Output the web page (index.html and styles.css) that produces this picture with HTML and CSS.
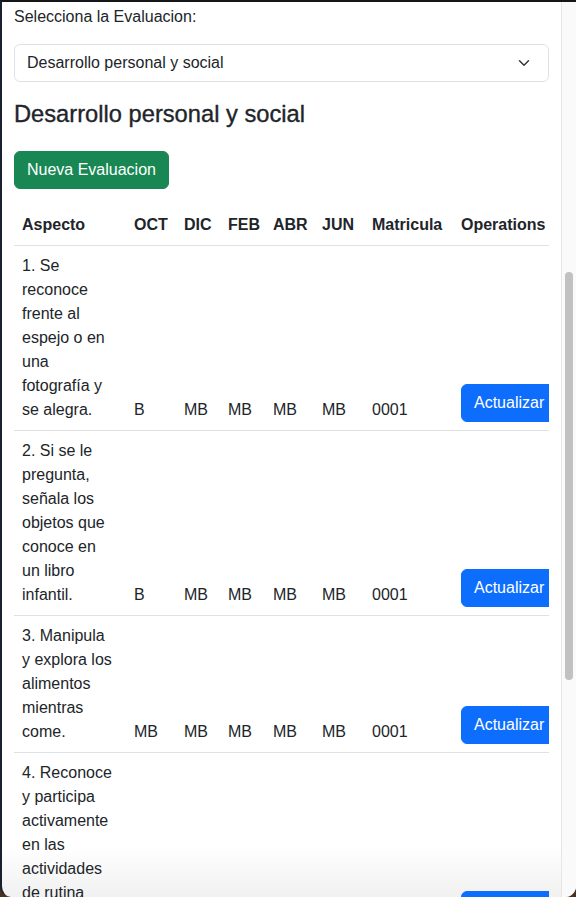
FILE: index.html
```html
<!DOCTYPE html>
<html lang="es">
<head>
<meta charset="utf-8">
<title>Evaluacion</title>
<link rel="stylesheet" href="styles.css">
</head>
<body>
<div class="window">
  <main class="content">
    <label class="form-label" for="eval">Selecciona la Evaluacion:</label>
    <div class="select">
      <span>Desarrollo personal y social</span>
      <svg class="chev" width="16" height="12" viewBox="0 0 16 16"><path d="m2 5 6 6 6-6" fill="none" stroke="#343a40" stroke-width="2" stroke-linecap="round" stroke-linejoin="round"/></svg>
    </div>
    <h3 class="title">Desarrollo personal y social</h3>
    <button class="btn btn-success">Nueva Evaluacion</button>
    <div class="table-responsive">
      <table class="table">
        <colgroup>
          <col class="c-asp"><col class="c-oct"><col class="c-dic"><col class="c-feb"><col class="c-abr"><col class="c-jun"><col class="c-mat"><col class="c-op">
        </colgroup>
        <thead>
          <tr><th>Aspecto</th><th>OCT</th><th>DIC</th><th>FEB</th><th>ABR</th><th>JUN</th><th>Matricula</th><th>Operations</th></tr>
        </thead>
        <tbody>
          <tr><td>1. Se reconoce frente al espejo o en una fotografía y se alegra.</td><td>B</td><td>MB</td><td>MB</td><td>MB</td><td>MB</td><td>0001</td><td><button class="btn btn-primary">Actualizar</button></td></tr>
          <tr><td>2. Si se le pregunta, señala los objetos que conoce en un libro infantil.</td><td>B</td><td>MB</td><td>MB</td><td>MB</td><td>MB</td><td>0001</td><td><button class="btn btn-primary">Actualizar</button></td></tr>
          <tr><td>3. Manipula y explora los alimentos mientras come.</td><td>MB</td><td>MB</td><td>MB</td><td>MB</td><td>MB</td><td>0001</td><td><button class="btn btn-primary">Actualizar</button></td></tr>
          <tr><td>4. Reconoce y participa activamente en las actividades de rutina diaria.</td><td>MB</td><td>MB</td><td>MB</td><td>MB</td><td>MB</td><td>0001</td><td><button class="btn btn-primary">Actualizar</button></td></tr>
        </tbody>
      </table>
    </div>
  </main>
  <div class="scrollbar"><div class="thumb"></div></div>
</div>
</body>
</html>
```
FILE: styles.css
```css
* { box-sizing: border-box; }
html, body { margin: 0; padding: 0; }
body {
  background: #4a3220;
  font-family: "Liberation Sans", Arial, Helvetica, sans-serif;
  font-size: 16px;
  line-height: 1.5;
  color: #212529;
}
.window {
  height: 897px;
  display: flex;
  background: linear-gradient(to bottom, #ffffff 0, #ffffff 845px, #f0f0f0 897px);
  border-top: 2px solid #15161a;
  border-left: 2px solid #1b2031;
  border-radius: 0 0 11px 11px;
  overflow: hidden;
}
.content {
  flex: 1;
  min-width: 0;
  padding: 3px 12px 0 12px;
  overflow: hidden;
}
.form-label {
  display: block;
  margin-bottom: 15px;
}
.select {
  display: flex;
  align-items: center;
  justify-content: space-between;
  height: 38px;
  padding: 0 12px 0 12px;
  border: 1px solid #dee2e6;
  border-radius: 6px;
  background: #fff;
}
.chev { margin-right: 4px; }
.title {
  margin: 18px 0 8px;
  font-size: 23.7px;
  font-weight: 500;
  line-height: 1.2;
  -webkit-text-stroke: 0.35px #212529;
}
.btn {
  display: inline-block;
  font-family: inherit;
  font-size: 16px;
  line-height: 1.5;
  padding: 6px 12px;
  border: 1px solid transparent;
  border-radius: 6px;
  color: #fff;
  cursor: pointer;
  white-space: nowrap;
}
.btn-success {
  margin-top: 15px;
  background: #198754;
  border-color: #198754;
}
.btn-primary {
  background: #0d6efd;
  border-color: #0d6efd;
}
.table-responsive {
  margin-top: 16px;
  overflow: hidden;
}
.table {
  width: 550px;
  table-layout: fixed;
  border-collapse: collapse;
}
.c-asp { width: 112px; }
.c-oct { width: 50px; }
.c-dic { width: 44px; }
.c-feb { width: 45px; }
.c-abr { width: 49px; }
.c-jun { width: 50px; }
.c-mat { width: 89px; }
.c-op  { width: 111px; }
.table th, .table td {
  padding: 8px;
  text-align: left;
  border-bottom: 1px solid #dee2e6;
}
.table th {
  font-weight: 700;
  vertical-align: bottom;
  white-space: nowrap;
}
.table td {
  vertical-align: bottom;
}
.table td:first-child {
  padding-right: 10px;
}
.scrollbar {
  flex: 0 0 15px;
  background: #fafafa;
  border-left: 1px solid #e6e6e6;
  padding: 270px 3px 0 3px;
}
.thumb {
  width: 8px;
  height: 408px;
  border-radius: 4px;
  background: #c1c1c1;
}
```
